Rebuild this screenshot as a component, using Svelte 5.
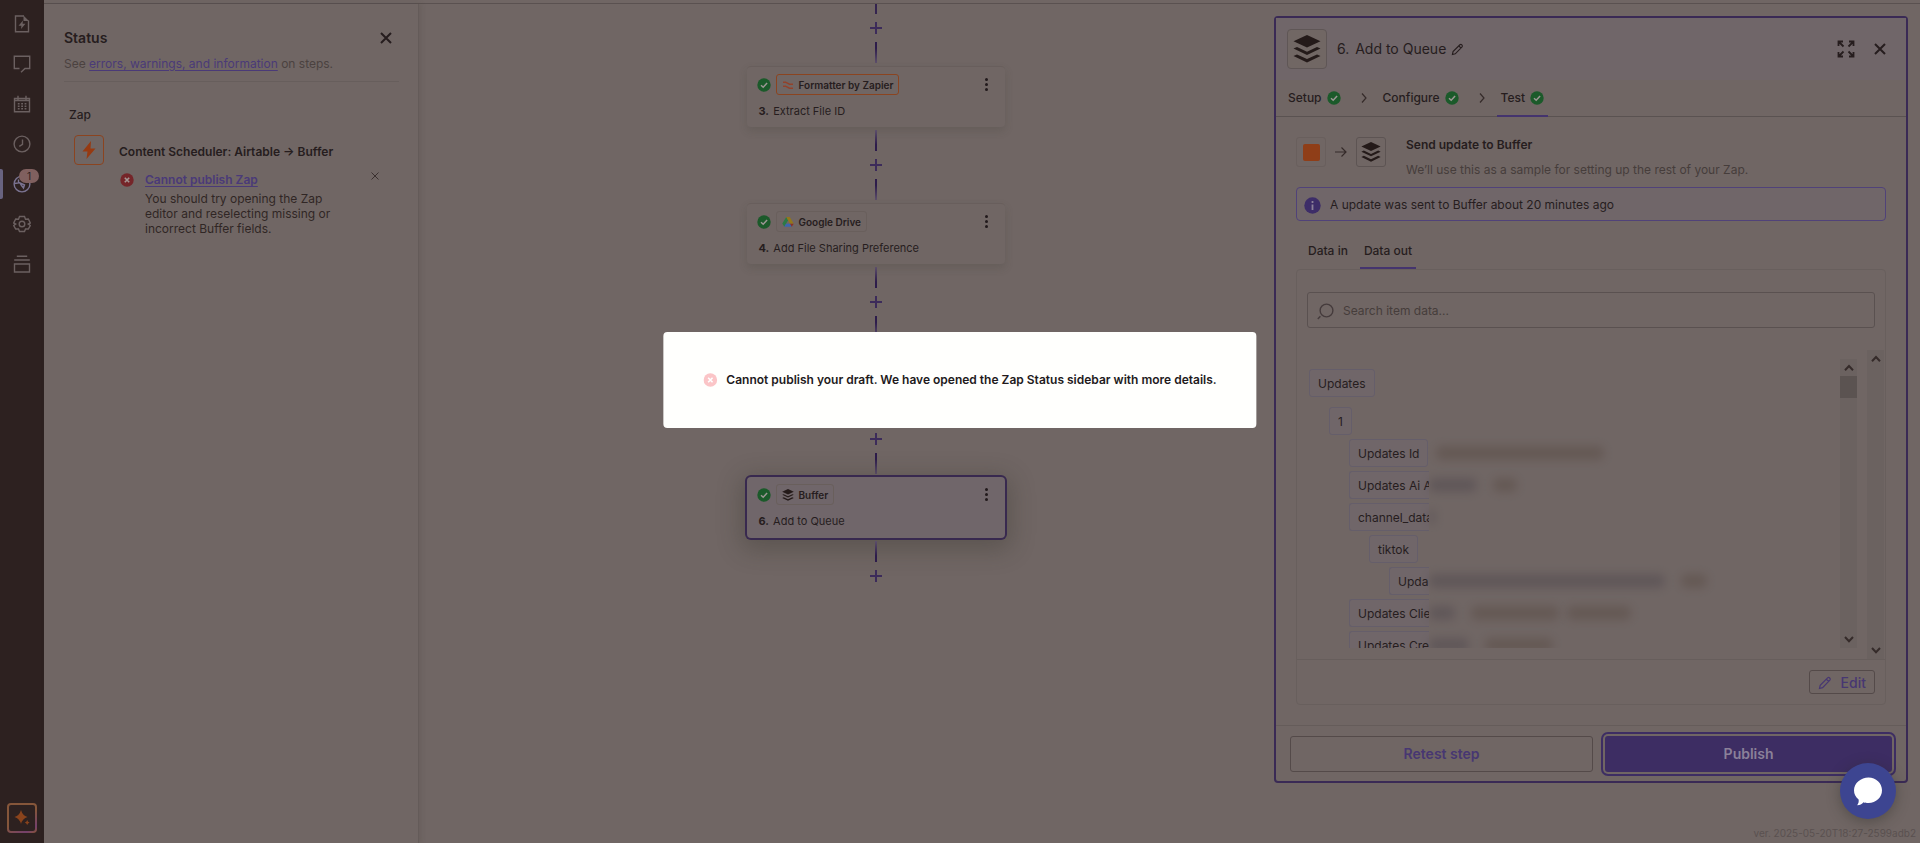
<script>
  let query = $state('')

  const nav = ['file', 'chat', 'calendar', 'clock', 'globe', 'gear', 'stack']

  const steps = [
    { n: 3, app: 'Formatter by Zapier', icon: 'formatter', name: 'Extract File ID' },
    { n: 4, app: 'Google Drive', icon: 'drive', name: 'Add File Sharing Preference' },
    { n: 5, covered: true },
    { n: 6, app: 'Buffer', icon: 'buffer', name: 'Add to Queue', active: true },
  ]

  const stages = ['Setup', 'Configure', 'Test']

  // clip = only the start of the key is shown, the rest is redacted
  const rows = [
    { level: 0, key: 'Updates', top: true },
    { level: 1, key: '1' },
    { level: 2, key: 'Updates Id', values: [168] },
    { level: 2, key: 'Updates Ai A', clip: true, pill: 48, values: [24] },
    { level: 2, key: 'channel_data', clip: true, pill: 6 },
    { level: 3, key: 'tiktok' },
    { level: 4, key: 'Upda', clip: true, pill: 236, values: [26] },
    { level: 2, key: 'Updates Clie', clip: true, pill: 26, values: [88, 64] },
    { level: 2, key: 'Updates Cre', clip: true, pill: 40, values: [68] },
  ]
</script>

{#snippet check()}
  <svg class="check" viewBox="0 0 14 14" aria-hidden="true">
    <circle cx="7" cy="7" r="6.7" />
    <path d="M4 7.2 6.2 9.3 10.1 5" />
  </svg>
{/snippet}

{#snippet cross(size)}
  <svg width={size} height={size} viewBox="0 0 12 12" fill="none" stroke="currentColor" stroke-width="2" aria-hidden="true">
    <path d="M1 1 11 11M11 1 1 11" />
  </svg>
{/snippet}

{#snippet pencil(size)}
  <svg width={size} height={size} viewBox="0 0 14 14" fill="none" stroke="currentColor" stroke-width="1.2" aria-hidden="true">
    <path d="M1.5 12.5 2.2 9.3 9.6 1.9Q10.6 1 11.7 2 12.8 3.2 11.9 4.2L4.6 11.7ZM8.4 3.2 10.7 5.4" />
  </svg>
{/snippet}

{#snippet buffer(size)}
  <svg width={size} height={size} viewBox="0 0 28 28" fill="#241a19" aria-hidden="true">
    <path d="M14 0 27.5 6.2 14 12.6.5 6.2Z" />
    <path d="M.5 13.6 4 12 14 16.7 24 12 27.5 13.6 14 20Z" />
    <path d="M.5 21 4 19.4 14 24.1 24 19.4 27.5 21 14 27.6Z" />
  </svg>
{/snippet}

{#snippet appIcon(name)}
  {#if name === 'buffer'}
    {@render buffer(12)}
  {:else if name === 'drive'}
    <svg width="12" height="12" viewBox="0 0 24 24" aria-hidden="true">
      <path fill="#2c7a45" d="M8.5 2 12.2 8.4 4.7 21.500.6 14.900Z" />
      <path fill="#94771a" d="M8.500 2H15.500L23.400 15.300H16Z" />
      <path fill="#3b66ad" d="M8.100 15.300H16.500L19.600 21.500H4.500Z" />
      <path fill="#8a3128" d="M16 15.300H23.400L19.600 21.500Z" />
    </svg>
  {:else}
    <svg width="12" height="12" viewBox="0 0 12 12" fill="none" stroke="#93422a" stroke-width="1.5" aria-hidden="true">
      <path d="M1 3.200H3.500L7.500 5.200H11M1 7.200H3.500L7.500 9.200H11" />
    </svg>
  {/if}
{/snippet}

{#snippet arrow(down)}
  <svg class="arrow" width="10" height="8" viewBox="0 0 10 8" aria-hidden="true">
    <path d={down ? 'M1 2 5 6.2 9 2' : 'M1 6.2 5 2 9 6.2'} />
  </svg>
{/snippet}

<div class="app">
  <nav class="rail" aria-label="Editor">
    {#each nav as item}
      <button class="rail-item" class:current={item === 'globe'} aria-label={item}>
        <svg width="18" height="18" viewBox="0 0 18 18" fill="none" stroke="currentColor" stroke-width="1.4" aria-hidden="true">
          {#if item === 'file'}
            <path d="M11 1H2.5V16.8H15.5V5.5" />
            <path d="M10.500.500 16 6H10.500ZM10 5.500 5.500 10.800H8.400L8 14 12.500 8.800H9.600Z" fill="currentColor" stroke="none" />
          {:else if item === 'chat'}
            <path d="M6.500 13.500H1.300V1.300H16.700V13.500H12L8 17.300" />
          {:else if item === 'calendar'}
            <path d="M1.500 3.500H16.500V16.800H1.500ZM5 .8V5M13 .8V5M1.500 5.500H16.500" />
            <path d="M4.800 8.800H13.800M4.800 11.300H13.800M4.800 13.800H13.800" stroke-dasharray="1.800 1.600" />
          {:else if item === 'clock'}
            <circle cx="9" cy="9" r="7.900" />
            <path d="M9.500 4.500V9.400L6.300 11.300" />
          {:else if item === 'globe'}
            <circle cx="9" cy="9" r="7.900" />
            <path d="M1.500 8.500 5.500 8V4.500M7 8 11.500 10 10.500 13 8.500 10.500Z" />
          {:else if item === 'gear'}
            <path d="M6.500 1.500H11.500L12.500 4.200 15.300 4 17.300 8 15.300 9 17.300 10.500 15.300 14 12.500 13.900 11.500 16.500H6.500L5.500 13.900 2.700 14 .7 10.500 2.700 9 .7 8 2.700 4 5.500 4.200Z" />
            <circle cx="9" cy="9" r="2.800" />
          {:else}
            <path d="M1.500 9H16.500V17H1.500ZM1.200 5H16.800M3.800 1.300H14.200" />
          {/if}
        </svg>
        {#if item === 'globe'}<span class="badge">1</span>{/if}
      </button>
    {/each}
    <button class="spark" aria-label="AI assistant">
      <svg width="18" height="18" viewBox="0 0 18 18" fill="#8a431c" aria-hidden="true">
        <path d="M8 1Q9.500 6.500 14.500 8 9.500 9.500 8 15 6.500 9.500 1.500 8 6.500 6.500 8 1ZM14.200 11Q14.700 13 16.600 13.500 14.700 14 14.200 16 13.700 14 11.800 13.500 13.700 13 14.200 11Z" />
      </svg>
    </button>
  </nav>

  <div class="workspace">
    <div class="topline"></div>
    <div class="columns">
      <aside class="status">
        <header class="status-head">
          <div class="status-title">
            <h2>Status</h2>
            <button class="icon-button" aria-label="Close status">{@render cross(12)}</button>
          </div>
          <p>See <a href="#issues">errors, warnings, and information</a> on steps.</p>
        </header>
        <h3>Zap</h3>
        <div class="issue">
          <span class="zap-icon">
            <svg width="14" height="18" viewBox="0 0 14 18" fill="#963a12" aria-hidden="true">
              <path d="M9 0 .5 10.5H5.5L4.5 18 13.5 7.5H8.5Z" />
            </svg>
          </span>
          <div class="issue-main">
            <h4>Content Scheduler: Airtable → Buffer</h4>
            <div class="issue-body">
              <svg class="error" width="14" height="14" viewBox="0 0 14 14" aria-hidden="true">
                <circle cx="7" cy="7" r="6.7" fill="#752529" />
                <path d="M4.8 4.8 9.2 9.2M9.2 4.8 4.8 9.2" stroke="#a39694" stroke-width="1.6" />
              </svg>
              <div class="issue-text">
                <a href="#publish">Cannot publish Zap</a>
                <p>You should try opening the Zap editor and reselecting missing or incorrect Buffer fields.</p>
              </div>
              <button class="icon-button dismiss" aria-label="Dismiss">
                <svg width="8" height="8" viewBox="0 0 8 8" fill="none" stroke="currentColor" aria-hidden="true">
                  <path d="M.5.5 7.5 7.5M7.5.5.5 7.5" />
                </svg>
              </button>
            </div>
          </div>
        </div>
      </aside>

      <main class="canvas">
        <div class="flow">
          <div class="connector first">
            <span class="line up"></span>
            <button class="plus" aria-label="Add step"></button>
            <span class="line"></span>
          </div>
          {#each steps as step (step.n)}
            <article class="card" class:active={step.active}>
              {#if !step.covered}
                <div class="card-top">
                  {@render check()}
                  <span class="app-tag" class:orange={step.icon === 'formatter'}>
                    {@render appIcon(step.icon)}
                    {step.app}
                  </span>
                  <button class="icon-button kebab" aria-label="Step menu"><i></i><i></i><i></i></button>
                </div>
                <div class="card-name"><b>{step.n}.</b> {step.name}</div>
              {/if}
            </article>
            <div class="connector" class:last={step.active}>
              <span class="line up"></span>
              <button class="plus" aria-label="Add step"></button>
              {#if !step.active}<span class="line"></span>{/if}
            </div>
          {/each}
        </div>
      </main>

      <section class="side">
        <div class="editor">
          <header class="editor-head">
            <span class="app-box large">{@render buffer(28)}</span>
            <h2><span>6.</span> Add to Queue</h2>
            <button class="icon-button" aria-label="Rename">{@render pencil(13)}</button>
            <div class="head-actions">
              <button class="icon-button" aria-label="Expand">
                <svg width="18" height="18" viewBox="0 0 18 18" fill="none" stroke="currentColor" stroke-width="1.8" aria-hidden="true">
                  <path d="M1.5 6V1.5H6M1.5 1.5 6.5 6.5M12 1.5H16.5V6M16.5 1.5 11.5 6.5M1.5 12V16.5H6M1.5 16.5 6.5 11.5M16.5 12V16.5H12M16.5 16.5 11.5 11.5" />
                </svg>
              </button>
              <button class="icon-button" aria-label="Close">{@render cross(12)}</button>
            </div>
          </header>

          <div class="stages">
            {#each stages as stage, i}
              {#if i > 0}
                <svg class="chevron" width="6" height="10" viewBox="0 0 6 10" aria-hidden="true"><path d="M1 .5 5 5 1 9.5" /></svg>
              {/if}
              <button class="stage" class:selected={stage === 'Test'}>{stage}{@render check()}</button>
            {/each}
          </div>

          <div class="editor-body">
            <div class="sample">
              <span class="app-box"><span class="square"></span></span>
              <svg class="to" width="12" height="12" viewBox="0 0 12 12" aria-hidden="true"><path d="M0 6H11M6.5 1.5 11 6 6.5 10.5" /></svg>
              <span class="app-box dim">{@render buffer(20)}</span>
              <div class="sample-text">
                <h3>Send update to Buffer</h3>
                <p>We’ll use this as a sample for setting up the rest of your Zap.</p>
              </div>
            </div>

            <div class="notice">
              <svg width="17" height="17" viewBox="0 0 17 17" aria-hidden="true">
                <circle cx="8.5" cy="8.5" r="8.2" fill="#3d2d68" />
                <path d="M8.5 4V6M8.5 7.4V13" stroke="#8b8098" stroke-width="1.8" />
              </svg>
              <span>A update was sent to Buffer about 20 minutes ago</span>
            </div>

            <div class="data-tabs">
              <button>Data in</button>
              <button class="selected">Data out</button>
            </div>

            <div class="data">
              <label class="search">
                <svg width="17" height="17" viewBox="0 0 17 17" fill="none" stroke="currentColor" stroke-width="1.4" aria-hidden="true">
                  <circle cx="9.5" cy="7.5" r="6.4" />
                  <path d="M3.4 13.2.8 16" />
                </svg>
                <input type="text" placeholder="Search item data..." aria-label="Search item data" bind:value={query} />
              </label>

              <div class="results">
                <div class="tree">
                  {#each rows as row}
                    <div class="row level-{row.level}" class:top={row.top}>
                      <span class="key" class:clip={row.clip}>{row.key}</span>
                      {#if row.pill}<span class="smudge pill" style="width: {row.pill}px"></span>{/if}
                      {#each row.values ?? [] as width}
                        <span class="smudge" style="width: {width}px"></span>
                      {/each}
                    </div>
                  {/each}
                </div>
                <div class="scrollbar inner">{@render arrow(false)}<span class="thumb"></span>{@render arrow(true)}</div>
                <div class="scrollbar">{@render arrow(false)}{@render arrow(true)}</div>
              </div>

              <div class="data-foot">
                <button class="edit">{@render pencil(14)}Edit</button>
              </div>
            </div>
          </div>

          <footer class="actions">
            <button class="retest">Retest step</button>
            <button class="publish">Publish</button>
          </footer>
        </div>
        <div class="version">ver. 2025-05-20T18:27-2599adb2</div>
      </section>
    </div>
  </div>

  <div class="modal" role="alertdialog" aria-label="Publish error">
    <svg width="14" height="14" viewBox="0 0 14 14" aria-hidden="true">
      <circle cx="7" cy="7" r="6.8" fill="#fbc5c7" />
      <path d="M4.8 4.8 9.2 9.2M9.2 4.8 4.8 9.2" stroke="#fff" stroke-width="1.6" />
    </svg>
    Cannot publish your draft. We have opened the Zap Status sidebar with more details.
  </div>

  <button class="chat-fab" aria-label="Open chat">
    <svg width="30" height="30" viewBox="0 0 30 30" fill="#fff" aria-hidden="true">
      <path d="M15.5 1.5C23 1.5 29 7 29 14.3S23 27 15.5 27C13.5 27 12 26.8 10.5 26.2 9 28 6.5 29.3 4.2 29.2 5.5 27.5 6 25.5 5.6 23.5 2.5 21 1 18 1 14.3 1 7 8 1.5 15.5 1.5Z" />
    </svg>
  </button>
</div>

<style>
  :global(body) {
    background: #706664;
  }

  .app {
    position: relative;
    display: flex;
    min-height: 100vh;
    overflow: hidden;
    background: #706664;
    color: #261d1e;
    font-family: Inter, 'Liberation Sans', sans-serif;
    font-size: 12px;
    line-height: 16px;
  }

  .app *,
  .app *::before {
    box-sizing: border-box;
  }

  svg {
    display: block;
    flex: none;
  }

  h2, h3, h4, p {
    margin: 0;
    font-size: inherit;
  }

  button {
    margin: 0;
    padding: 0;
    border: 0;
    background: none;
    color: inherit;
    font: inherit;
    cursor: pointer;
  }

  a {
    color: #4a3a78;
    text-underline-offset: 2px;
  }

  .icon-button {
    display: flex;
    align-items: center;
    justify-content: center;
  }

  .check {
    width: 14px;
    height: 14px;
  }

  .check circle {
    fill: #1b5a2a;
  }

  .check path {
    fill: none;
    stroke: #9c9694;
    stroke-width: 1.5;
  }

  /* left rail */
  .rail {
    display: flex;
    flex-direction: column;
    align-items: center;
    flex: none;
    width: 44px;
    padding: 4px 0 10px;
    background: #2d2120;
    color: #6b6060;
  }

  .rail-item {
    position: relative;
    display: flex;
    align-items: center;
    justify-content: center;
    width: 44px;
    height: 40px;
  }

  .rail-item.current {
    color: #7a7391;
  }

  .rail-item.current::before {
    content: '';
    position: absolute;
    left: 0;
    top: 5px;
    width: 3px;
    height: 30px;
    border-radius: 0 2px 2px 0;
    background: #686380;
  }

  .badge {
    position: absolute;
    left: 19px;
    top: 5px;
    width: 20px;
    height: 14px;
    border-radius: 7px;
    background: #80605f;
    color: #2d2120;
    font-size: 10px;
    line-height: 14px;
    text-align: center;
  }

  .spark {
    display: flex;
    align-items: center;
    justify-content: center;
    width: 30px;
    height: 30px;
    margin-top: auto;
    border: 2px solid transparent;
    border-radius: 4px;
    background:
      linear-gradient(#2d2120, #2d2120) padding-box,
      linear-gradient(150deg, #85563a 50%, #74406c 85%, #8b5630) border-box;
  }

  .workspace {
    display: flex;
    flex: 1;
    flex-direction: column;
    min-width: 0;
  }

  .topline {
    height: 4px;
    border-bottom: 1px solid #5a5150;
  }

  .columns {
    display: flex;
    flex: 1;
  }

  /* status sidebar */
  .status {
    flex: none;
    width: 375px;
    padding: 24px 19px 0 20px;
    border-right: 1px solid #645b59;
    box-shadow: 2px 0 5px rgba(60, 52, 50, 0.15);
  }

  .status-head {
    padding-bottom: 9px;
    border-bottom: 1px solid #675e5c;
    color: #4b4240;
  }

  .status-title {
    display: flex;
    align-items: center;
    justify-content: space-between;
    padding-right: 7px;
    margin-bottom: 8px;
    color: #261d1e;
  }

  .status-title h2 {
    font-size: 14px;
    font-weight: 600;
    line-height: 20px;
  }

  .status h3 {
    margin: 25px 5px 12px;
    font-weight: 500;
  }

  .issue {
    display: flex;
    gap: 15px;
    padding-left: 10px;
  }

  .zap-icon {
    display: flex;
    align-items: center;
    justify-content: center;
    flex: none;
    width: 30px;
    height: 30px;
    border: 1px solid #8b4420;
    border-radius: 4px;
  }

  .issue-main {
    flex: 1;
    padding-top: 9px;
  }

  .issue h4 {
    margin-bottom: 12px;
    font-weight: 600;
  }

  .issue-body {
    display: flex;
    align-items: flex-start;
  }

  .error {
    margin: 1px 11px 0 1px;
  }

  .issue-text {
    flex: 1;
  }

  .issue-text a {
    font-weight: 600;
  }

  .issue-text p {
    padding: 3px 32px 0 0;
    color: #302625;
    line-height: 15px;
  }

  .dismiss {
    width: 8px;
    margin-right: 20px;
    color: #3a302f;
  }

  /* step canvas */
  .canvas {
    display: flex;
    flex: 1;
    justify-content: center;
    padding-left: 58px;
  }

  .flow {
    display: flex;
    flex-direction: column;
    align-items: center;
    width: 258px;
  }

  .connector {
    display: flex;
    flex-direction: column;
    align-items: center;
    justify-content: space-between;
    height: 76px;
    padding: 3px 0;
  }

  .connector.first {
    height: 62px;
    padding-top: 0;
  }

  .connector.first .line.up {
    height: 10px;
    background: #34244f;
  }

  .connector.last {
    height: 52px;
    justify-content: flex-start;
    gap: 8px;
  }

  .line {
    width: 2px;
    height: 21px;
    background: linear-gradient(#2d1c4b 30%, #5d4f6b);
  }

  .line.up {
    background: linear-gradient(#5d4f6b, #2d1c4b 70%);
  }

  .plus {
    width: 12px;
    height: 12px;
    background:
      linear-gradient(#3c2b5a, #3c2b5a) center / 12px 2px no-repeat,
      linear-gradient(#3c2b5a, #3c2b5a) center / 2px 12px no-repeat;
  }

  .card {
    width: 258px;
    height: 61px;
    padding: 7px 10px;
    border-top: 1px solid #685e5c;
    border-radius: 4px;
    box-shadow: 0 4px 8px rgba(60, 60, 50, 0.2);
  }

  .card.active {
    border: 0;
    background: #70666a;
    box-shadow: 0 0 0 2px #38294f, 0 6px 24px 6px rgba(45, 48, 38, 0.3);
  }

  .card-top {
    display: flex;
    align-items: center;
    gap: 5px;
  }

  .app-tag {
    display: flex;
    align-items: center;
    gap: 5px;
    height: 21px;
    padding: 0 5px;
    border: 1px solid #695f5c;
    border-radius: 3px;
    font-size: 10px;
    font-weight: 600;
  }

  .app-tag.orange {
    border-color: #8b4420;
  }

  .kebab {
    flex-direction: column;
    gap: 2px;
    width: 6px;
    margin-left: auto;
    margin-right: 5px;
  }

  .kebab i {
    width: 3px;
    height: 3px;
    border-radius: 50%;
    background: #221a1c;
  }

  .card-name {
    padding: 8px 2px 0;
    font-size: 11px;
  }

  .card-name b {
    margin-right: 1px;
    font-weight: 700;
  }

  /* step editor */
  .side {
    display: flex;
    flex: none;
    flex-direction: column;
    width: 646px;
    padding: 12px 0 2px;
  }

  .editor {
    display: flex;
    flex-direction: column;
    margin-right: 12px;
    border: 2px solid #3a2a55;
    border-radius: 4px;
  }

  .editor-head {
    display: flex;
    align-items: center;
    height: 62px;
    padding: 0 20px 0 11px;
    background: #706669;
  }

  .editor-head h2 {
    margin: 0 5px 0 10px;
    font-size: 14px;
    font-weight: 400;
  }

  .editor-head h2 span {
    margin-right: 2px;
  }

  .head-actions {
    display: flex;
    gap: 19px;
    margin-left: auto;
  }

  .app-box {
    display: flex;
    align-items: center;
    justify-content: center;
    flex: none;
    width: 30px;
    height: 30px;
    border: 1px solid #695f5d;
    border-radius: 3px;
  }

  .app-box.dim {
    border-color: #5d5453;
  }

  .app-box.large {
    width: 40px;
    height: 40px;
    border-color: #5f5656;
    border-radius: 4px;
    background: #716764;
  }

  .square {
    width: 17px;
    height: 17px;
    border-radius: 2px;
    background: #8f3e18;
  }

  .stages {
    display: flex;
    align-items: center;
    height: 37px;
    padding: 0 8px;
    border-bottom: 1px solid #5a5251;
  }

  .stage {
    display: flex;
    align-items: center;
    gap: 5px;
    height: 37px;
    padding: 2px 4px 0;
    border-bottom: 2px solid transparent;
    font-weight: 500;
  }

  .stage.selected,
  .data-tabs .selected {
    border-color: #44346e;
  }

  .chevron {
    margin: 0 12px 0 16px;
  }

  .chevron path,
  .to path,
  .arrow path {
    fill: none;
    stroke: #352b2a;
    stroke-width: 1.2;
  }

  .editor-body {
    padding: 20px 20px;
  }

  .sample {
    display: flex;
    align-items: flex-start;
  }

  .to {
    margin: 9px 9px 0;
  }

  .sample-text {
    padding-left: 20px;
  }

  .sample-text h3 {
    margin-bottom: 9px;
    font-weight: 600;
  }

  .sample-text p {
    color: #463d3b;
  }

  .notice {
    display: flex;
    align-items: center;
    gap: 9px;
    height: 34px;
    margin-top: 9px;
    padding: 2px 7px 0;
    border: 1px solid #504279;
    border-radius: 4px;
    background: #706669;
  }

  .data-tabs {
    display: flex;
    gap: 8px;
    height: 48px;
    padding: 14px 8px 0;
  }

  .data-tabs button {
    padding: 0 4px;
    border-bottom: 2px solid transparent;
    font-weight: 500;
  }

  .data {
    border: 1px solid #685f5d;
    border-radius: 4px;
  }

  .search {
    display: flex;
    align-items: center;
    gap: 9px;
    height: 36px;
    margin: 22px 10px;
    padding: 2px 9px 0;
    border: 1px solid #5a5150;
    border-radius: 3px;
    color: #453b3c;
  }

  .search input {
    flex: 1;
    min-width: 0;
    padding: 0;
    border: 0;
    outline: 0;
    background: none;
    color: inherit;
    font: inherit;
  }

  .search input::placeholder {
    color: #463d3b;
    opacity: 1;
  }

  .results {
    display: flex;
    height: 310px;
    padding-right: 1px;
    border-bottom: 1px solid #675e5c;
  }

  .tree {
    flex: 1;
    height: 298px;
    padding: 19px 0 0 12px;
    overflow: hidden;
  }

  .row {
    display: flex;
    align-items: center;
    height: 28px;
    margin-bottom: 4px;
  }

  .row.top {
    margin-bottom: 10px;
  }

  .level-1 { padding-left: 20px; }
  .level-2 { padding-left: 40px; }
  .level-3 { padding-left: 60px; }
  .level-4 { padding-left: 80px; }

  .key {
    flex: none;
    height: 28px;
    padding: 0 8px;
    border: 1px solid #655e6a;
    border-radius: 3px;
    background: #706669;
    line-height: 27px;
    white-space: nowrap;
  }

  .key.clip {
    width: 80px;
    padding-right: 0;
    border-right: 0;
    border-radius: 3px 0 0 3px;
    overflow: hidden;
  }

  .level-4 .key.clip {
    width: 40px;
  }

  .smudge {
    height: 14px;
    margin-left: 8px;
    border-radius: 6px;
    background: #55463e;
    opacity: 0.4;
    filter: blur(5px);
  }

  .smudge.pill {
    margin: 0 8px 0 0;
    background: #494249;
  }

  .scrollbar {
    display: flex;
    flex-direction: column;
    align-items: center;
    width: 17px;
    padding: 5px 0;
    background: #6b6260;
  }

  .scrollbar.inner {
    margin: 9px 10px 11px 0;
  }

  .arrow:last-child {
    margin-top: auto;
  }

  .arrow path {
    stroke-width: 2;
  }

  .thumb {
    width: 17px;
    height: 22px;
    margin-top: 4px;
    background: #5b5351;
  }

  .data-foot {
    display: flex;
    justify-content: flex-end;
    padding: 10px;
  }

  .edit {
    display: flex;
    align-items: center;
    gap: 9px;
    height: 24px;
    padding: 1px 8px 0;
    border: 1px solid #544a49;
    border-radius: 3px;
    color: #473772;
    font-size: 14px;
    font-weight: 500;
  }

  .actions {
    display: flex;
    gap: 12px;
    padding: 10px 14px 9px;
    border-top: 1px solid #655c5a;
  }

  .actions button {
    flex: 20;
    height: 36px;
    border-radius: 3px;
    font-size: 14px;
    font-weight: 600;
  }

  .actions .retest {
    flex: 21;
    border: 1px solid #544a49;
    color: #473772;
  }

  .publish {
    background: #3d2d63;
    box-shadow: 0 0 0 2px #706664, 0 0 0 4px #3d2d63;
    color: #8b8199;
  }

  .version {
    margin-top: auto;
    padding-right: 4px;
    color: #5a5150;
    font-size: 10px;
    text-align: right;
  }

  /* overlays */
  .modal {
    position: absolute;
    left: 50%;
    top: 380px;
    display: flex;
    align-items: center;
    gap: 9px;
    padding: 40px;
    border-radius: 4px;
    background: #fffffd;
    color: #221a1c;
    font-weight: 600;
    white-space: nowrap;
    transform: translate(-50%, -50%);
  }

  .chat-fab {
    position: absolute;
    right: 24px;
    bottom: 24px;
    display: flex;
    align-items: center;
    justify-content: center;
    width: 56px;
    height: 56px;
    border-radius: 50%;
    background: #3d4591;
    box-shadow: 0 3px 14px rgba(40, 40, 35, 0.4);
  }
</style>
